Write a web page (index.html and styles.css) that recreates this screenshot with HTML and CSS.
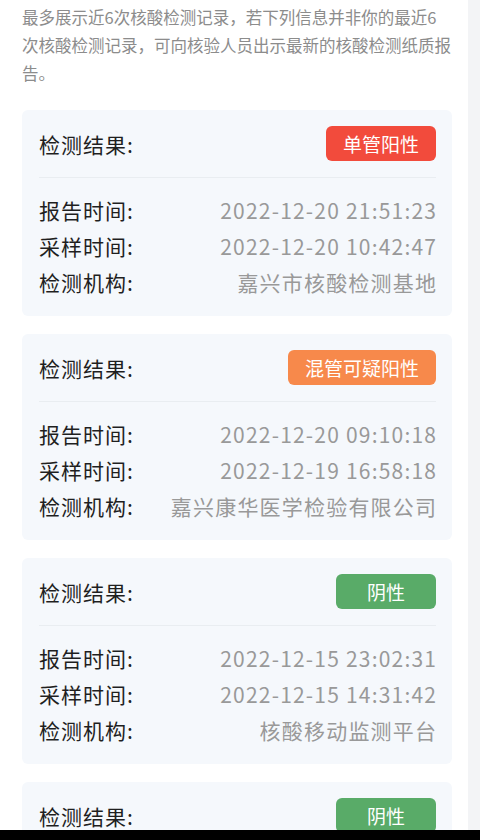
FILE: index.html
```html
<!DOCTYPE html>
<html lang="zh-CN">

<head>
    <meta charset="UTF-8">
    <meta name="viewport" content="width=device-width, initial-scale=1.0">
    <title>核酸检测记录</title>
    <link rel="stylesheet" href="styles.css">
</head>

<body>
    <div class="page">
        <p class="intro">最多展示近6次核酸检测记录，若下列信息并非你的最近6次核酸检测记录，可向核验人员出示最新的核酸检测纸质报告。</p>

        <div class="card">
            <div class="resultRow">
                <span class="label">检测结果:</span>
                <span class="badge red">单管阳性</span>
            </div>
            <div class="line"></div>
            <div class="row"><span class="label">报告时间:</span><span class="value">2022-12-20 21:51:23</span></div>
            <div class="row"><span class="label">采样时间:</span><span class="value">2022-12-20 10:42:47</span></div>
            <div class="row"><span class="label">检测机构:</span><span class="value">嘉兴市核酸检测基地</span></div>
        </div>

        <div class="card">
            <div class="resultRow">
                <span class="label">检测结果:</span>
                <span class="badge orange">混管可疑阳性</span>
            </div>
            <div class="line"></div>
            <div class="row"><span class="label">报告时间:</span><span class="value">2022-12-20 09:10:18</span></div>
            <div class="row"><span class="label">采样时间:</span><span class="value">2022-12-19 16:58:18</span></div>
            <div class="row"><span class="label">检测机构:</span><span class="value">嘉兴康华医学检验有限公司</span></div>
        </div>

        <div class="card">
            <div class="resultRow">
                <span class="label">检测结果:</span>
                <span class="badge green">阴性</span>
            </div>
            <div class="line"></div>
            <div class="row"><span class="label">报告时间:</span><span class="value">2022-12-15 23:02:31</span></div>
            <div class="row"><span class="label">采样时间:</span><span class="value">2022-12-15 14:31:42</span></div>
            <div class="row"><span class="label">检测机构:</span><span class="value">核酸移动监测平台</span></div>
        </div>

        <!-- 最后一张只露出头部 -->
        <div class="card lastCard">
            <div class="resultRow">
                <span class="label">检测结果:</span>
                <span class="badge green">阴性</span>
            </div>
        </div>
    </div>

    <div class="navBar"></div>
</body>

</html>
```

FILE: styles.css
```css
body {
    margin: 0;
    background-color: #f3f4f6;
    font-family: "Noto Sans CJK SC", "Noto Sans", sans-serif;
    height: 840px;
    overflow: hidden;
}

.page {
    width: 468px;
    height: 840px;
    box-sizing: border-box;
    background-color: white;
    padding: 3px 16px 0 22px;
}

.intro {
    margin: 0 0 23px;
    width: 430px;
    font-size: 16.5px;
    line-height: 28px;
    color: #8c8c8c;
}

.card {
    width: 430px;
    height: 206px;
    box-sizing: border-box;
    background-color: #f5f8fc;
    border-radius: 6px;
    padding: 16px 16px 0 17px;
    margin-bottom: 18px;
}

.lastCard {
    height: auto;
    padding-bottom: 8px;
    margin-bottom: 0;
    border-radius: 6px 6px 0 0;
}

.resultRow {
    display: flex;
    justify-content: space-between;
    align-items: center;
    height: 35px;
}

.label {
    font-size: 21px;
    letter-spacing: 1px;
    color: #1f1f1f;
}

.badge {
    height: 35px;
    line-height: 35px;
    padding: 0 17px;
    border-radius: 6px;
    color: white;
    font-size: 19px;
}

.red {
    background-color: #f24b3c;
}

.orange {
    background-color: #f7894b;
}

.green {
    background-color: #59ab68;
    padding: 0 31px;
}

.line {
    height: 1px;
    background-color: #e9edf1;
    margin: 16px 0 14px;
}

.row {
    display: flex;
    justify-content: space-between;
    height: 36px;
    line-height: 36px;
}

.value {
    font-size: 21px;
    letter-spacing: 1.2px;
    margin-right: -1.2px;
    color: #999;
}

.navBar {
    position: fixed;
    left: 0;
    right: 0;
    bottom: 0;
    height: 10px;
    background-color: black;
}
```
